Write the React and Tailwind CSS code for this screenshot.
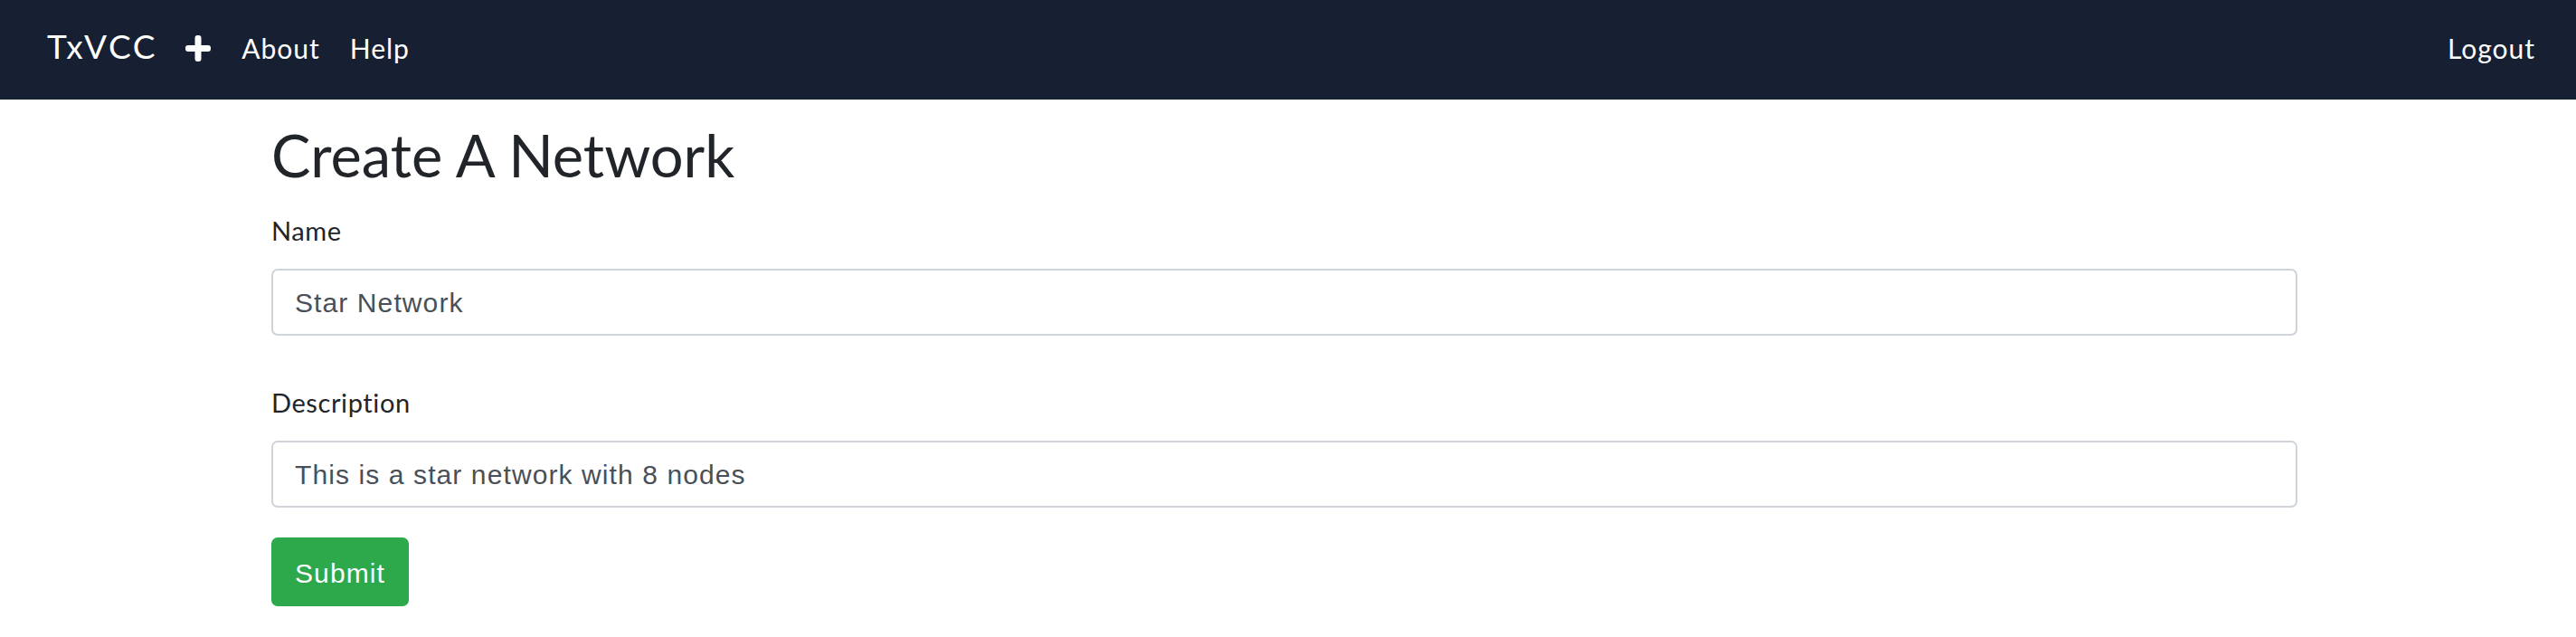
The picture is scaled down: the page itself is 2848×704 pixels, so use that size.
import React, { useState } from 'react';

const sans = "font-['Lato','Noto_Sans',sans-serif]";
const sys = "font-['Liberation_Sans','Arial',sans-serif]";

const PlusIcon = () => (
  <svg width="28" height="29" viewBox="0 0 28 29" className="block">
    <rect x="10.5" y="0" width="7" height="29" rx="3" fill="white" />
    <rect x="0" y="11" width="28" height="7" rx="3" fill="white" />
  </svg>
);

const Field = ({ label, value, onChange }) => (
  <div className="mb-[52px]">
    <label className="block text-[29px] leading-[43.2px] tracking-[0.6px] text-[#212529] mb-[21px]">{label}</label>
    <input
      value={value}
      onChange={e => onChange(e.target.value)}
      className={`${sys} block w-full h-[74px] px-[24px] pt-[2px] text-[30px] tracking-[1.1px] text-[#495057] bg-white border-2 border-[#ced4da] rounded-[7px] outline-none`}
    />
  </div>
);

const App = () => {
  const [name, setName] = useState('Star Network');
  const [desc, setDesc] = useState('This is a star network with 8 nodes');

  return (
    <div className={`${sans} min-h-[704px] bg-white`}>
      <nav className="h-[110px] bg-[#171f32] flex items-center justify-between pl-[52px] pr-[45px]">
        <div className="flex items-baseline mb-[10px]">
          <a className="text-[37px] tracking-[2.6px] text-white leading-none mr-[31px]">TxVCC</a>
          <span className="mr-[34px] translate-y-[3px]"><PlusIcon /></span>
          <a className="text-[30px] tracking-[1px] text-white leading-none mr-[33px]">About</a>
          <a className="text-[30px] tracking-[1px] text-white leading-none">Help</a>
        </div>
        <a className="text-[30px] tracking-[1px] text-white leading-none mb-[5px]">Logout</a>
      </nav>

      <div className="pl-[300px] pr-[308px]">
        <h1 className="text-[65px] leading-[78px] text-[#212529] mt-[22px] mb-[23px]">Create A Network</h1>
        <Field label="Name" value={name} onChange={setName} />
        <Field label="Description" value={desc} onChange={setDesc} />
        <button className={`${sys} -mt-[19px] h-[76px] px-[26px] pt-[2px] text-[30px] tracking-[1.1px] text-white bg-[#2da84b] rounded-[7px]`}>
          Submit
        </button>
      </div>
    </div>
  );
};

export default App;
